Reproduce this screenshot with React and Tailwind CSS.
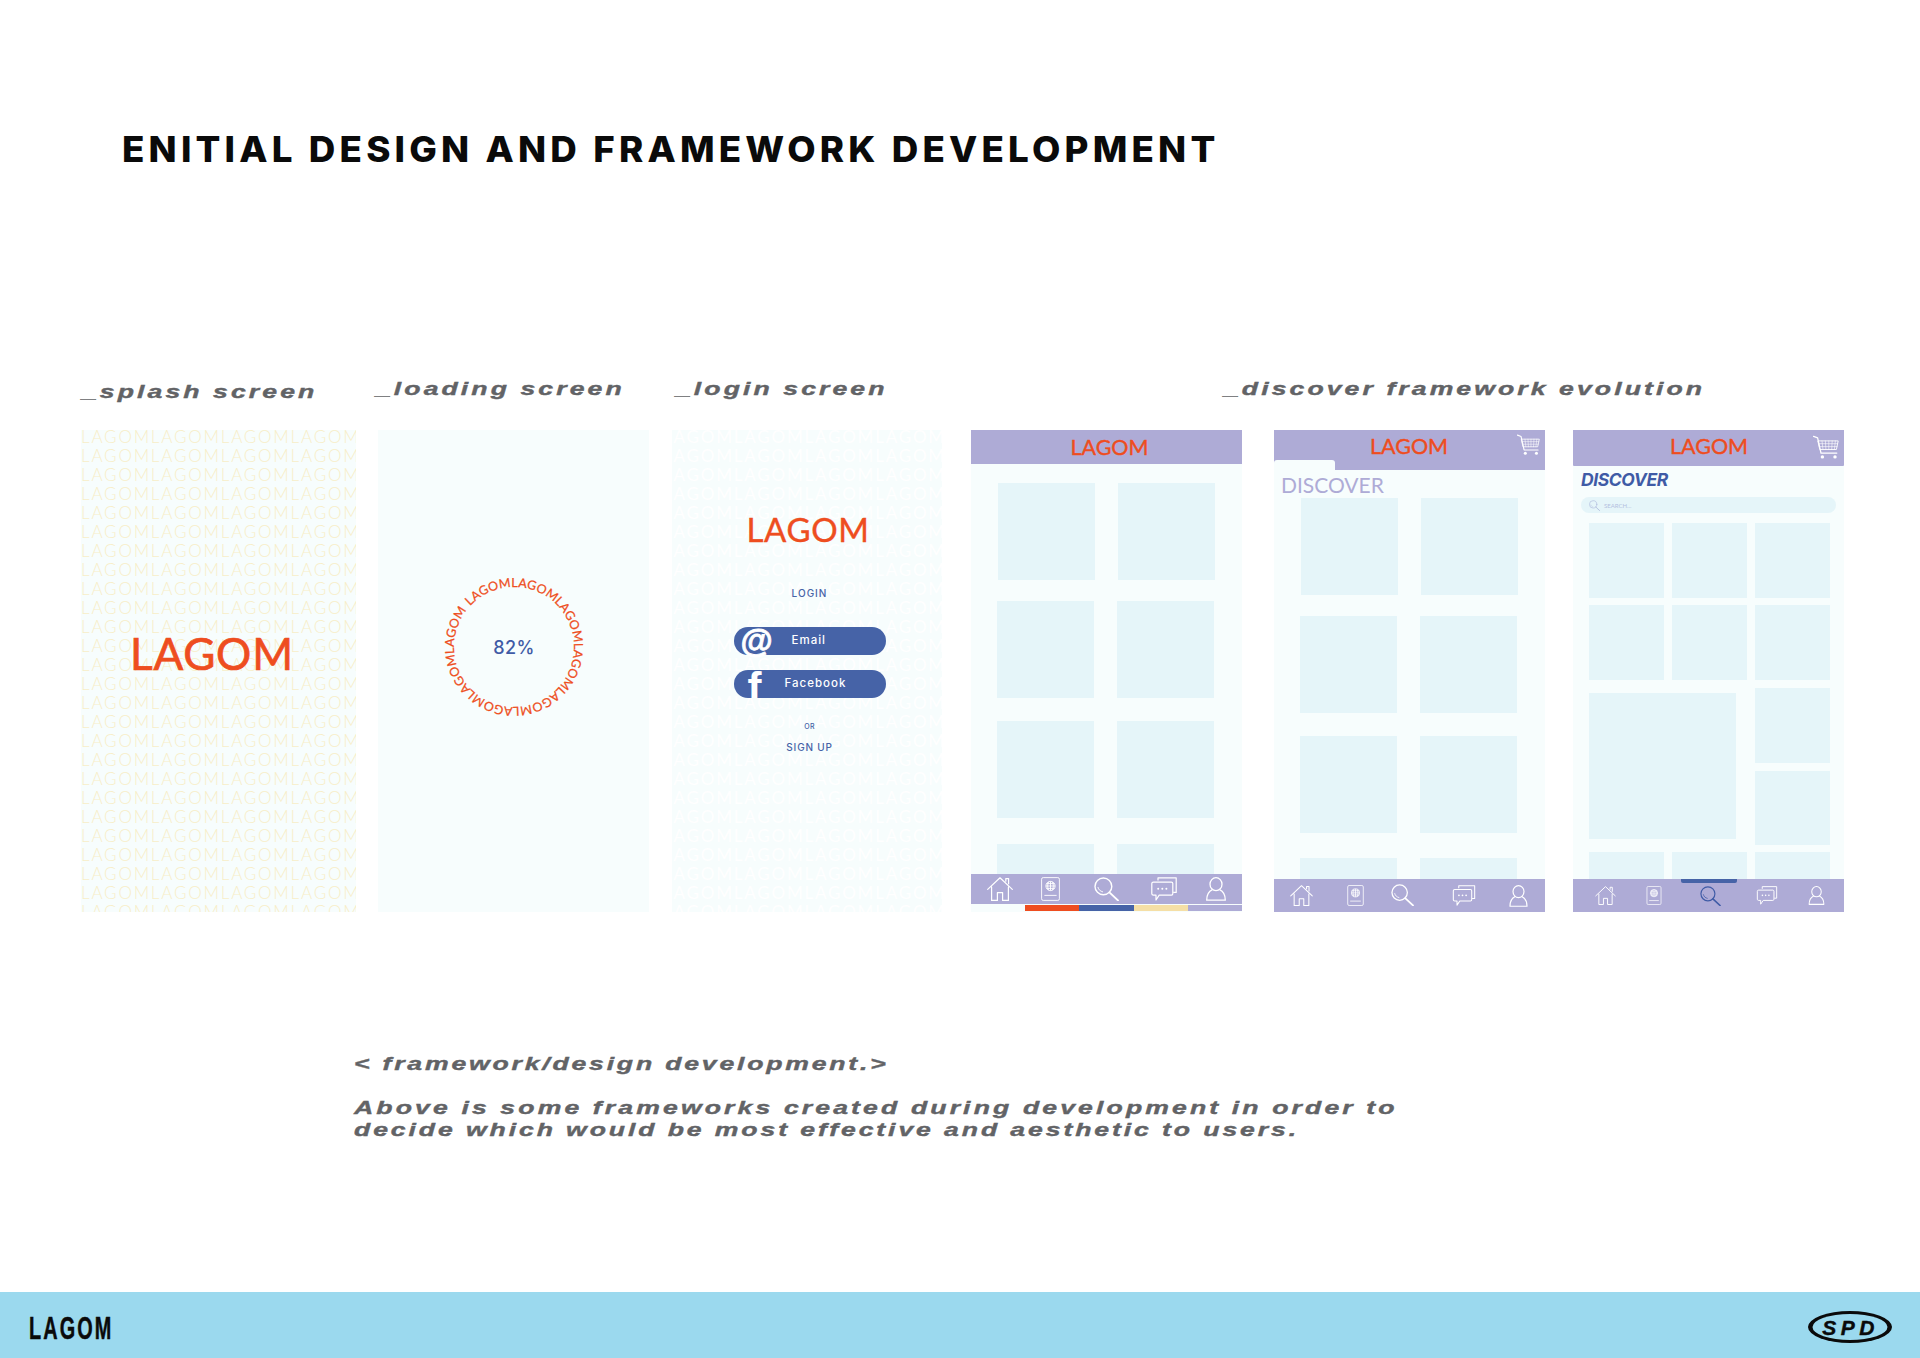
import React from "react";

const S = "stroke-white fill-none";

const Home = ({ className = "" }) => (
  <svg viewBox="0 0 26 24" className={className} strokeWidth="1.2" strokeLinejoin="round" strokeLinecap="round">
    <path className={S} d="M0.7 12.4 13 0.8 25.3 12.4M4.6 10.2V23.4H10.4V15.6H15.6V23.4H21.4V10.2" />
    <path className={S} d="M18.8 4.2V1.6H21.6V6.8" />
  </svg>
);

const Passport = ({ className = "" }) => (
  <svg viewBox="0 0 19 24" className={className} strokeWidth="0.9">
    <rect className={S} x="0.6" y="0.6" width="17.8" height="22.8" rx="1.6" />
    <circle className={S} cx="9.5" cy="9" r="4.6" />
    <path className={S} d="M4.9 9H14.1M9.5 4.4V13.6M5.6 6.6H13.4M5.6 11.4H13.4M7.5 4.9C6.4 7.4 6.4 10.6 7.5 13.1M11.5 4.9C12.6 7.4 12.6 10.6 11.5 13.1" />
    <path className={S} d="M3.4 18.4H15.6" />
  </svg>
);

const Search = ({ className = "", stroke = "stroke-white" }) => (
  <svg viewBox="0 0 25 24" className={className} strokeWidth="1.4" strokeLinecap="round" fill="none">
    <circle className={stroke} cx="9.4" cy="9.4" r="8.4" />
    <path className={stroke} strokeWidth="1.9" d="M15.4 15.4 24 23.4" />
    <path className={stroke} strokeWidth="0.9" d="M4 10.4C4.6 12.8 6.2 14.2 8.6 14.8" />
  </svg>
);

const Chat = ({ className = "" }) => (
  <svg viewBox="0 0 26 24" className={className} strokeWidth="1.2" strokeLinejoin="round">
    <path className={S} d="M7 3.6V0.8H25.2V15.4H22.2" />
    <path className={S} d="M2.4 5.2H20.4C21.2 5.2 21.8 5.8 21.8 6.6V16.8C21.8 17.6 21.2 18.2 20.4 18.2H8.2L5 23V18.2H2.4C1.4 18.2 0.8 17.6 0.8 16.8V6.6C0.8 5.8 1.4 5.2 2.4 5.2Z" />
    <circle className="fill-white" cx="7.2" cy="11.8" r="1" />
    <circle className="fill-white" cx="11.3" cy="11.8" r="1" />
    <circle className="fill-white" cx="15.4" cy="11.8" r="1" />
  </svg>
);

const Person = ({ className = "" }) => (
  <svg viewBox="0 0 20 24" className={className} strokeWidth="1.3" strokeLinejoin="round">
    <ellipse className={S} cx="10" cy="7.2" rx="6" ry="6.5" />
    <path className={S} d="M6.4 12.6C3 14.2 0.7 17.6 0.7 23.2H19.3C19.3 17.6 17 14.2 13.6 12.6" />
  </svg>
);

const Cart = ({ className = "" }) => (
  <svg viewBox="0 0 26 24" className={className} strokeWidth="0.9" strokeLinecap="round" strokeLinejoin="round">
    <path className={S} strokeWidth="1.3" d="M0.6 0.8 4.6 2.4 8 17.6H23.8" />
    <path className={S} d="M5.2 5.4H25.2L23.4 14H7.2Z" />
    <path className={S} strokeWidth="0.6" d="M9 5.4 10 14M12.4 5.4 12.9 14M15.8 5.4 15.8 14M19.2 5.4 18.7 14M22.4 5.4 21.4 14M5.9 8.2H24.6M6.5 11.1H24" />
    <circle className="fill-white" cx="9.4" cy="21.4" r="1.7" />
    <circle className="fill-white" cx="22" cy="21.4" r="1.7" />
  </svg>
);

const Pattern = ({ className }) => (
  <div className={`absolute inset-0 -mt-[3px] overflow-hidden font-['Lato',sans-serif] text-[17px] leading-[19px] tracking-[1.8px] whitespace-nowrap ${className}`}>
    {Array.from({ length: 27 }, (_, i) => (
      <div key={i}>LAGOMLAGOMLAGOMLAGOMLAGOM</div>
    ))}
  </div>
);

const Logo = ({ className = "" }) => (
  <div className={`font-['Lato',sans-serif] font-normal text-[#ee4d20] [-webkit-text-stroke:0.4px_#ee4d20] ${className}`}>LAGOM</div>
);

const Block = ({ className = "" }) => <div className={`bg-[#e5f5f9] shrink-0 ${className}`} />;

const Label = ({ children, className = "" }) => (
  <div className={`font-['Liberation_Sans',sans-serif] font-bold italic text-[19px] leading-[24px] tracking-[2.2px] text-[#626366] [-webkit-text-stroke:0.4px_#626366] scale-x-[1.4] origin-left whitespace-nowrap ${className}`}>
    {children}
  </div>
);

export default function App() {
  return (
    <div className="w-[1920px] h-[1358px] bg-white flex flex-col overflow-hidden">
      <h1 className="ml-[122px] mt-[129px] h-[40px] font-['Inter',sans-serif] font-extrabold text-[35px] leading-[40px] tracking-[3.97px] text-[#0a0a0a] scale-x-[1.05] origin-left whitespace-nowrap">
        ENITIAL DESIGN AND FRAMEWORK DEVELOPMENT
      </h1>

      <div className="mt-[208px] h-[24px] flex items-start">
        <Label className="ml-[82px] mt-[3px] w-[293px]">_splash screen</Label>
        <Label className="ml-[1px] w-[300px]">_loading screen</Label>
        <Label className="w-[548px]">_login screen</Label>
        <Label>_discover framework evolution</Label>
      </div>

      <div className="mt-[29px] flex items-stretch h-[482px]">
        {/* splash */}
        <section className="relative ml-[81px] w-[275px] bg-[#f7fdfd] overflow-hidden">
          <Pattern className="font-light text-[#f7eec8]" />
          <Logo className="absolute left-[49px] top-[197px] text-[44px] leading-[52px] tracking-[0.8px] [-webkit-text-stroke:0.7px_#ee4d20]" />
        </section>

        {/* loading */}
        <section className="ml-[22px] w-[271px] bg-[#f7fdfd] flex justify-center pt-[142px]">
          <svg viewBox="0 0 150 150" className="w-[150px] h-[150px]">
            <defs>
              <path id="ring" d="M31.1 34.1A60 60 0 1 1 118.9 115.9A60 60 0 1 1 31.1 34.1" />
            </defs>
            <text className="font-['Lato',sans-serif] fill-[#ee4d20] stroke-[#ee4d20]" strokeWidth="0.25" fontSize="12.5" textLength="371">
              <textPath href="#ring">LAGOMLAGOMLAGOMLAGOMLAGOMLAGOMLAGOMLAGOM</textPath>
            </text>
            <text x="75" y="82" textAnchor="middle" className="font-['Inter',sans-serif] font-medium fill-[#3f5ba6]" fontSize="18" letterSpacing="0.4">82%</text>
          </svg>
        </section>

        {/* login */}
        <section className="relative ml-[23px] w-[270px] bg-[#f7fdfd] overflow-hidden">
          <Pattern className="font-normal text-white -indent-[9px]" />
          <div className="relative flex flex-col items-center">
            <Logo className="mt-[79px] ml-[2px] text-[33px] leading-[40px] tracking-[0.6px]" />
            <div className="mt-[37px] ml-[5px] font-['Inter',sans-serif] font-medium text-[10px] leading-[14px] tracking-[1px] text-[#4663a7]">LOGIN</div>
            <div className="mt-[27px] ml-[5px] w-[152px] h-[28px] rounded-full bg-[#4663a7] flex items-center relative">
              <span className="absolute left-[7px] top-[-5px] font-['Liberation_Sans',sans-serif] font-bold text-[33px] leading-[38px] text-white [-webkit-text-stroke:0.8px_white]">@</span>
              <span className="ml-[58px] font-['Inter',sans-serif] font-medium text-[11.5px] tracking-[1px] text-white">Email</span>
            </div>
            <div className="mt-[15px] ml-[5px] w-[152px] h-[28px] rounded-full bg-[#4663a7] flex items-center relative overflow-hidden">
              <span className="absolute left-[14px] top-[-3px] font-['Liberation_Sans',sans-serif] font-bold text-[42px] leading-[42px] text-white">f</span>
              <span className="ml-[51px] font-['Inter',sans-serif] font-medium text-[11.5px] tracking-[1px] text-white">Facebook</span>
            </div>
            <div className="mt-[24px] ml-[5px] font-['Inter',sans-serif] font-medium text-[7px] leading-[10px] tracking-[0.4px] text-[#4663a7]">OR</div>
            <div className="mt-[8px] ml-[5px] font-['Inter',sans-serif] font-medium text-[10px] leading-[14px] tracking-[0.8px] text-[#4663a7]">SIGN UP</div>
          </div>
        </section>

        {/* frame 1 */}
        <section className="ml-[29px] w-[271px] bg-[#f7fdfd] flex flex-col">
          <header className="h-[34px] shrink-0 bg-[#aeabd6] flex justify-center">
            <Logo className="ml-[6px] mt-[2px] text-[21.5px] leading-[30px]" />
          </header>
          <div className="flex-1 overflow-hidden flex flex-col">
            <div className="mt-[19px] ml-[27px] flex gap-[23px]"><Block className="w-[97px] h-[97px]" /><Block className="w-[97px] h-[97px]" /></div>
            <div className="mt-[21px] ml-[26px] flex gap-[23px]"><Block className="w-[97px] h-[97px]" /><Block className="w-[97px] h-[97px]" /></div>
            <div className="mt-[23px] ml-[26px] flex gap-[23px]"><Block className="w-[97px] h-[97px]" /><Block className="w-[97px] h-[97px]" /></div>
            <div className="mt-[26px] ml-[26px] flex gap-[23px]"><Block className="w-[97px] h-[97px]" /><Block className="w-[97px] h-[97px]" /></div>
          </div>
          <nav className="h-[30px] shrink-0 bg-[#aeabd6] flex items-center">
            <Home className="ml-[16px] w-[26px] h-[24px]" />
            <Passport className="ml-[28px] w-[19px] h-[24px]" />
            <Search className="ml-[34px] w-[25px] h-[24px]" />
            <Chat className="ml-[32px] w-[26px] h-[24px]" />
            <Person className="ml-[29px] w-[20px] h-[24px]" />
          </nav>
          <div className="mt-[1px] h-[6px] mb-[1px] ml-[54px] flex">
            <div className="w-[54px] bg-[#ee4d20]" />
            <div className="w-[55px] bg-[#4663a7]" />
            <div className="w-[54px] bg-[#f5dfa6]" />
            <div className="flex-1 bg-[#aeabd6]" />
          </div>
        </section>

        {/* frame 2 */}
        <section className="ml-[32px] w-[271px] bg-[#f7fdfd] flex flex-col">
          <header className="h-[40px] shrink-0 bg-[#aeabd6] flex relative">
            <Logo className="ml-[96px] mt-[1px] text-[21.5px] leading-[30px]" />
            <Cart className="absolute right-[5px] top-[4px] w-[23px] h-[22px]" />
            <div className="absolute left-0 bottom-0 w-[61px] h-[10px] rounded-t-[3px] bg-[#f7fdfd]" />
          </header>
          <div className="flex-1 overflow-hidden flex flex-col">
            <div className="mt-[3px] ml-[7px] font-['Lato',sans-serif] text-[21px] leading-[24px] text-[#aeabd6]">DISCOVER</div>
            <div className="mt-[1px] ml-[27px] flex gap-[23px]"><Block className="w-[97px] h-[97px]" /><Block className="w-[97px] h-[97px]" /></div>
            <div className="mt-[21px] ml-[26px] flex gap-[23px]"><Block className="w-[97px] h-[97px]" /><Block className="w-[97px] h-[97px]" /></div>
            <div className="mt-[23px] ml-[26px] flex gap-[23px]"><Block className="w-[97px] h-[97px]" /><Block className="w-[97px] h-[97px]" /></div>
            <div className="mt-[25px] ml-[26px] flex gap-[23px]"><Block className="w-[97px] h-[97px]" /><Block className="w-[97px] h-[97px]" /></div>
          </div>
          <nav className="h-[33px] shrink-0 bg-[#aeabd6] flex items-center">
            <Home className="ml-[16px] w-[23px] h-[21px]" />
            <Passport className="ml-[34px] w-[17px] h-[21px]" />
            <Search className="ml-[27px] w-[23px] h-[22px] -mt-[2px]" />
            <Chat className="ml-[38px] w-[24px] h-[21px]" />
            <Person className="ml-[33px] w-[19px] h-[22px]" />
          </nav>
        </section>

        {/* frame 3 */}
        <section className="ml-[28px] w-[271px] bg-[#f7fdfd] flex flex-col">
          <header className="h-[36px] shrink-0 bg-[#aeabd6] rounded-b-[1px] flex relative">
            <Logo className="ml-[97px] mt-[1px] text-[21.5px] leading-[30px]" />
            <Cart className="absolute right-[5px] top-[5px] w-[26px] h-[25px]" />
          </header>
          <div className="flex-1 overflow-hidden flex flex-col">
            <div className="mt-[3px] ml-[8px] font-['Inter',sans-serif] font-bold italic text-[17.5px] leading-[22px] tracking-[-0.4px] text-[#3f5ba6]">DISCOVER</div>
            <div className="mt-[6px] ml-[8px] w-[255px] h-[16px] shrink-0 rounded-full bg-[#e5f5f9] flex items-center">
              <Search className="ml-[8px] w-[11px] h-[11px]" stroke="stroke-[#aeb9dc]" />
              <span className="ml-[4px] font-['Lato',sans-serif] text-[6px] text-[#b4c0e0]">SEARCH...</span>
            </div>
            <div className="mt-[10px] ml-[16px] flex gap-[8px]"><Block className="w-[75px] h-[75px]" /><Block className="w-[75px] h-[75px]" /><Block className="w-[75px] h-[75px]" /></div>
            <div className="mt-[7px] ml-[16px] flex gap-[8px]"><Block className="w-[75px] h-[75px]" /><Block className="w-[75px] h-[75px]" /><Block className="w-[75px] h-[75px]" /></div>
            <div className="mt-[8px] ml-[16px] flex items-start">
              <Block className="mt-[5px] w-[147px] h-[146px]" />
              <div className="ml-[19px] flex flex-col gap-[8px]">
                <Block className="w-[75px] h-[75px]" />
                <Block className="w-[75px] h-[74px]" />
              </div>
            </div>
            <div className="mt-[7px] ml-[16px] flex gap-[8px]"><Block className="w-[75px] h-[75px]" /><Block className="w-[75px] h-[75px]" /><Block className="w-[75px] h-[75px]" /></div>
          </div>
          <nav className="h-[33px] shrink-0 bg-[#aeabd6] flex items-center relative">
            <div className="absolute left-[108px] top-0 w-[56px] h-[4px] rounded-b-[2px] bg-[#4663a7]" />
            <Home className="ml-[22px] w-[21px] h-[19px]" />
            <Passport className="ml-[30px] w-[16px] h-[19px]" />
            <Search className="ml-[38px] w-[21px] h-[20px]" stroke="stroke-[#3f5ba6]" />
            <Chat className="ml-[35px] w-[22px] h-[19px]" />
            <Person className="ml-[30px] w-[17px] h-[19px]" />
          </nav>
        </section>
      </div>

      <div className="mt-[141px] ml-[354px] font-['Liberation_Sans',sans-serif] font-bold italic text-[#626366] [-webkit-text-stroke:0.4px_#626366] text-[19px] leading-[22px] tracking-[2px] scale-x-[1.4] origin-left whitespace-nowrap">
        &lt; framework/design development.&gt;
      </div>
      <p className="mt-[22px] ml-[354px] font-['Liberation_Sans',sans-serif] font-bold italic text-[#626366] [-webkit-text-stroke:0.4px_#626366] text-[19px] leading-[22px] tracking-[2.23px] scale-x-[1.4] origin-left whitespace-nowrap">
        Above is some frameworks created during development in order to
        <br />
        <span className="tracking-[2.07px]">decide which would be most effective and aesthetic to users.</span>
      </p>

      <footer className="mt-auto h-[66px] shrink-0 bg-[#9bd9ee] flex items-center justify-between pl-[29px] pr-[28px]">
        <div className="mt-[5px] font-['Liberation_Sans',sans-serif] font-bold text-[32px] leading-[32px] tracking-[3.4px] text-[#0a0a0a] [-webkit-text-stroke:0.5px_#0a0a0a] scale-x-[0.62] origin-left">LAGOM</div>
        <svg viewBox="0 0 84 32" className="mt-[3px] w-[84px] h-[32px]">
          <ellipse cx="42" cy="16" rx="42" ry="16" fill="#0a0a0a" />
          <ellipse cx="42" cy="16" rx="37.5" ry="13" fill="#9bd9ee" />
          <text x="42.5" y="23.5" textAnchor="middle" fontSize="21" fontStyle="italic" fontWeight="700" letterSpacing="4.5" stroke="#0a0a0a" strokeWidth="0.4" className="font-['Liberation_Sans',sans-serif] fill-[#0a0a0a]">SPD</text>
        </svg>
      </footer>
    </div>
  );
}
